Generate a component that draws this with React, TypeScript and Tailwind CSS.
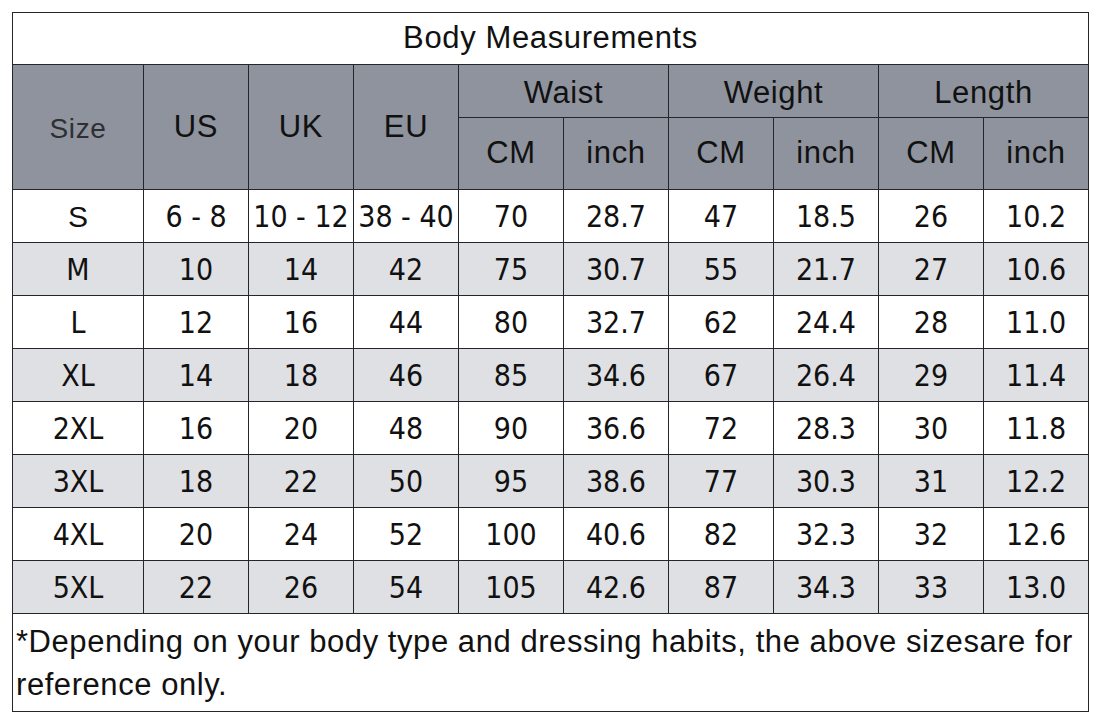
const sans = "font-['Liberation_Sans',Arial,Helvetica,sans-serif]";
const cond = "font-['DejaVu_Sans_Condensed','DejaVu_Sans',Verdana,sans-serif] [font-stretch:condensed]";

type Row = [string, string, string, string, string, string, string, string, string, string];

const rows: Row[] = [
  ["S", "6 - 8", "10 - 12", "38 - 40", "70", "28.7", "47", "18.5", "26", "10.2"],
  ["M", "10", "14", "42", "75", "30.7", "55", "21.7", "27", "10.6"],
  ["L", "12", "16", "44", "80", "32.7", "62", "24.4", "28", "11.0"],
  ["XL", "14", "18", "46", "85", "34.6", "67", "26.4", "29", "11.4"],
  ["2XL", "16", "20", "48", "90", "36.6", "72", "28.3", "30", "11.8"],
  ["3XL", "18", "22", "50", "95", "38.6", "77", "30.3", "31", "12.2"],
  ["4XL", "20", "24", "52", "100", "40.6", "82", "32.3", "32", "12.6"],
  ["5XL", "22", "26", "54", "105", "42.6", "87", "34.3", "33", "13.0"],
];

const cell = "border border-[#24262b] p-0 text-center align-middle whitespace-nowrap";

export default function App() {
  return (
    <div className="min-h-screen bg-white p-3">
      <table className="w-[1077px] table-fixed border-collapse text-[#111]">
        <colgroup>
          <col className="w-[131px]" />
          {Array.from({ length: 9 }).map((_, i) => (
            <col key={i} className="w-[105px]" />
          ))}
        </colgroup>
        <thead>
          <tr className="h-[52px]">
            <th colSpan={10} className={`${cell} ${sans} bg-white text-[31px] font-normal tracking-[0.02em]`}>
              Body Measurements
            </th>
          </tr>
          <tr className={`h-[53px] bg-[#8e939d] ${sans} text-[31px] font-normal tracking-[0.02em]`}>
            <th rowSpan={2} className={`${cell} pt-1 text-[28px] font-normal text-[#2e2f33]`}>Size</th>
            <th rowSpan={2} className={`${cell} font-normal`}>US</th>
            <th rowSpan={2} className={`${cell} font-normal`}>UK</th>
            <th rowSpan={2} className={`${cell} font-normal`}>EU</th>
            <th colSpan={2} className={`${cell} pt-1 font-normal`}>Waist</th>
            <th colSpan={2} className={`${cell} pt-1 font-normal`}>Weight</th>
            <th colSpan={2} className={`${cell} pt-1 font-normal`}>Length</th>
          </tr>
          <tr className={`h-[72px] bg-[#8e939d] ${sans} text-[31px] font-normal tracking-[0.02em]`}>
            {["CM", "inch", "CM", "inch", "CM", "inch"].map((t, i) => (
              <th key={i} className={`${cell} font-normal`}>{t}</th>
            ))}
          </tr>
        </thead>
        <tbody>
          {rows.map((r, ri) => (
            <tr key={r[0]} className={`h-[53px] ${ri % 2 === 1 ? "bg-[#dfe0e4]" : "bg-white"}`}>
              {r.map((v, ci) => (
                <td
                  key={ci}
                  className={`${cell} ${ri === 0 && ci === 0 ? `${sans} text-[30px]` : `${cond} text-[30px]`}`}
                >
                  {v}
                </td>
              ))}
            </tr>
          ))}
          <tr className="h-[98px] bg-white">
            <td colSpan={10} className={`${cell} ${sans} pt-[6px] pl-[3px] text-left align-top text-[31px] leading-[43px] tracking-[0.018em]`}>
              *Depending on your body type and dressing habits, the above sizesare for
              <br />
              reference only.
            </td>
          </tr>
        </tbody>
      </table>
    </div>
  );
}
